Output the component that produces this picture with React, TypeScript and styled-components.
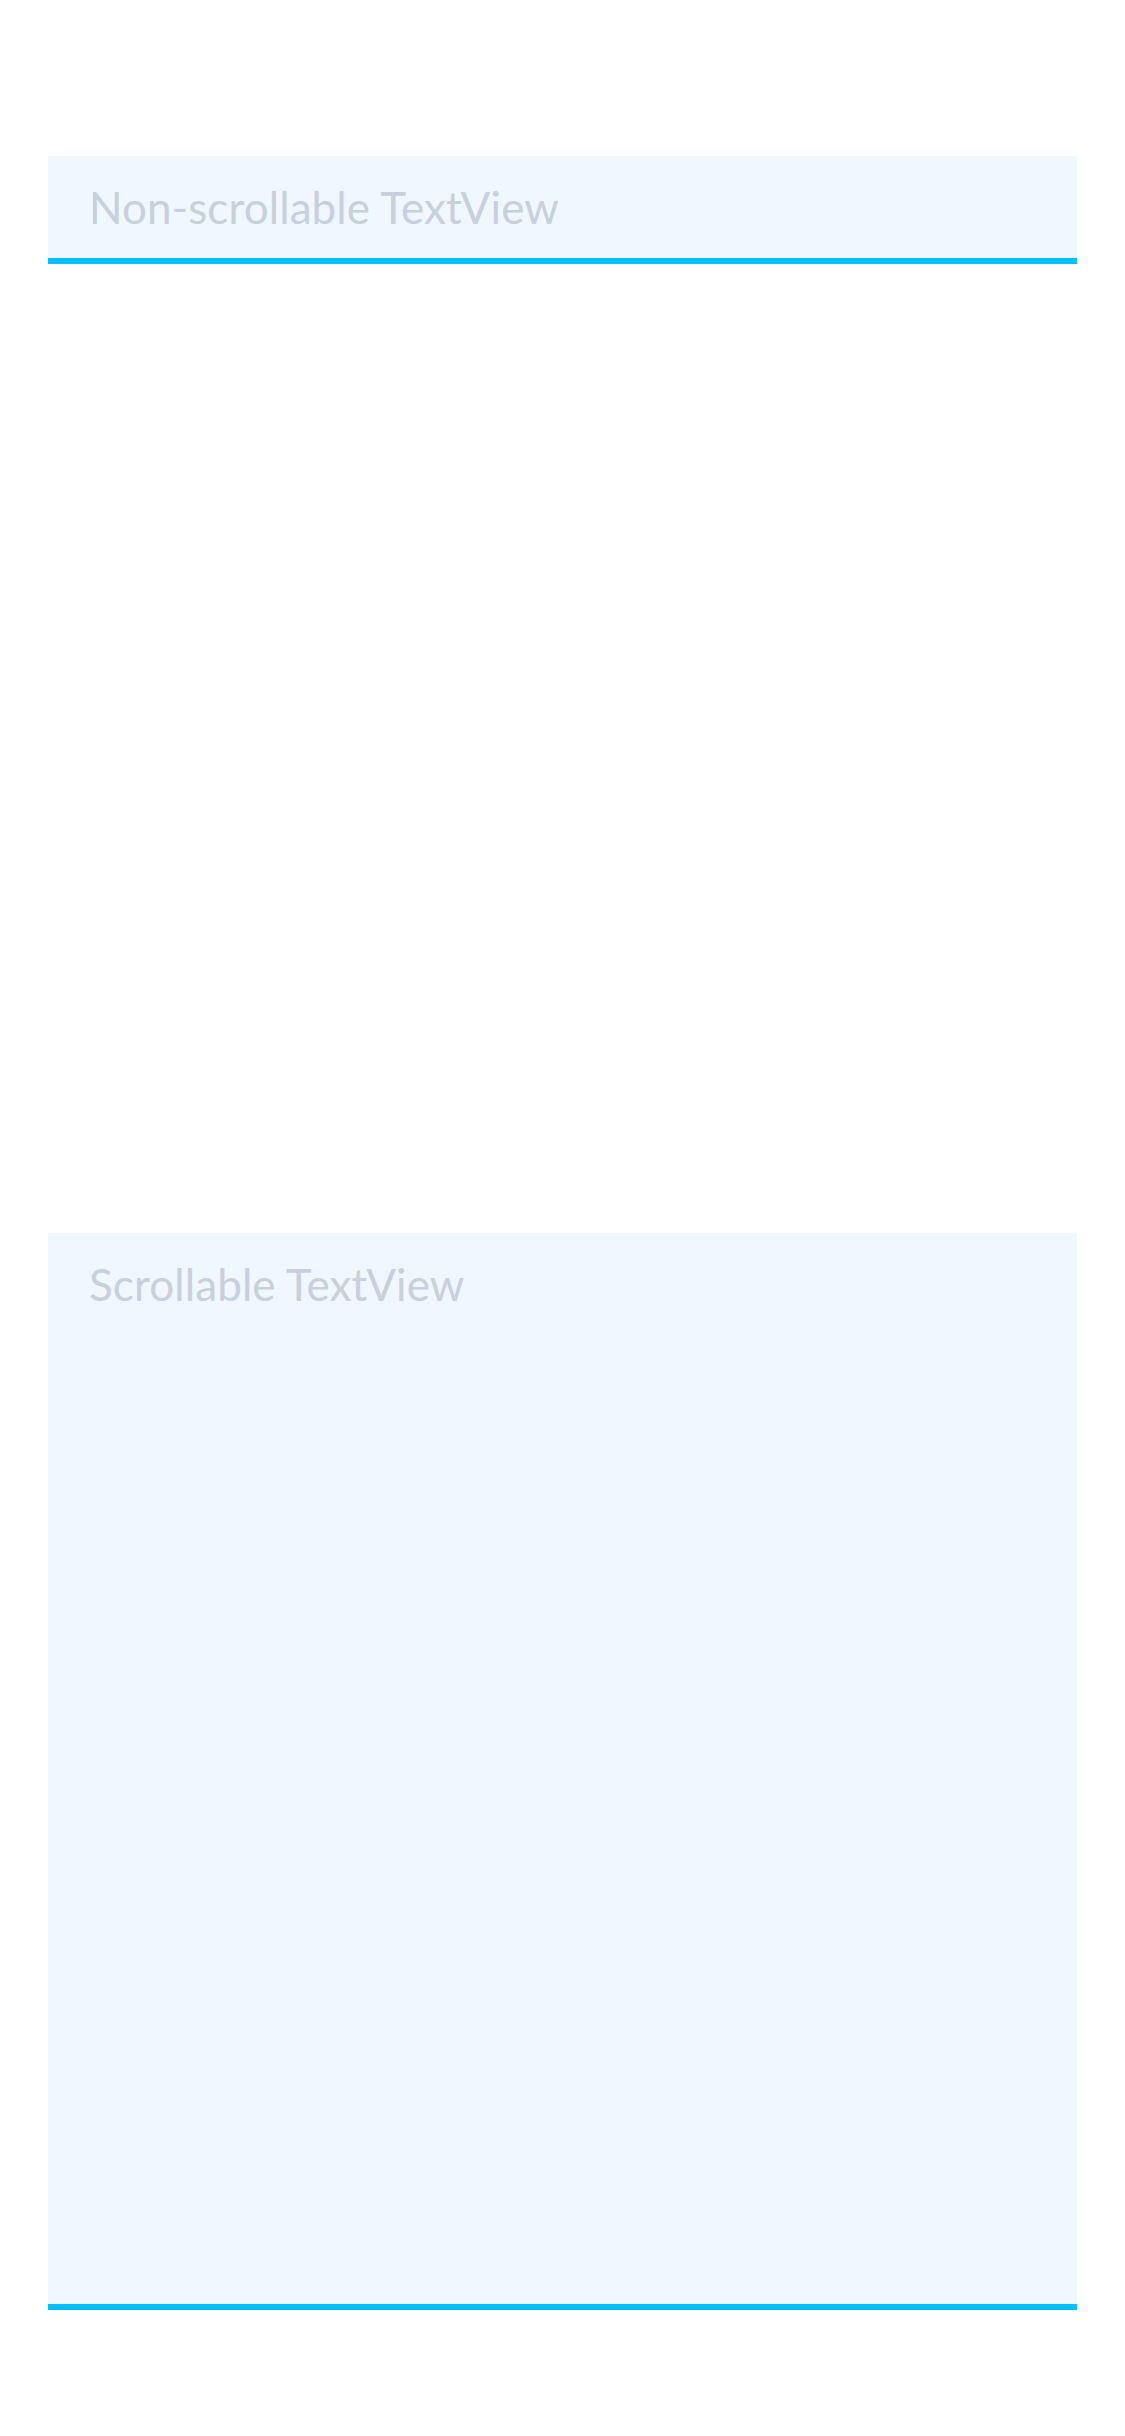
import React from "react";
import styled, { createGlobalStyle } from "styled-components";

const Global = createGlobalStyle`
  html, body {
    margin: 0;
    padding: 0;
    background: #ffffff;
  }
  body {
    font-family: Lato, "Open Sans", "Liberation Sans", sans-serif;
  }
`;

const Page = styled.main`
  box-sizing: border-box;
  width: 1125px;
  min-height: 2436px;
  padding: 156px 48px 0 48px;
  display: flex;
  flex-direction: column;
  gap: 969px;
  background: #ffffff;
`;

const Field = styled.div<{ $height: number }>`
  box-sizing: border-box;
  height: ${(p) => p.$height}px;
  background: #f0f7fe;
  border-bottom: 6px solid #06c0fd;
  padding: 24px 40px 0 41px;
`;

const Placeholder = styled.div`
  font-family: Lato, "Open Sans", "Liberation Sans", sans-serif;
  font-weight: 400;
  font-size: 44px;
  line-height: 54px;
  color: #c8d0dc;
  letter-spacing: 0.1px;
  white-space: nowrap;
`;

export default function App() {
  return (
    <>
      <Global />
      <Page>
        <Field $height={108}>
          <Placeholder>Non-scrollable TextView</Placeholder>
        </Field>
        <Field $height={1077}>
          <Placeholder>Scrollable TextView</Placeholder>
        </Field>
      </Page>
    </>
  );
}
